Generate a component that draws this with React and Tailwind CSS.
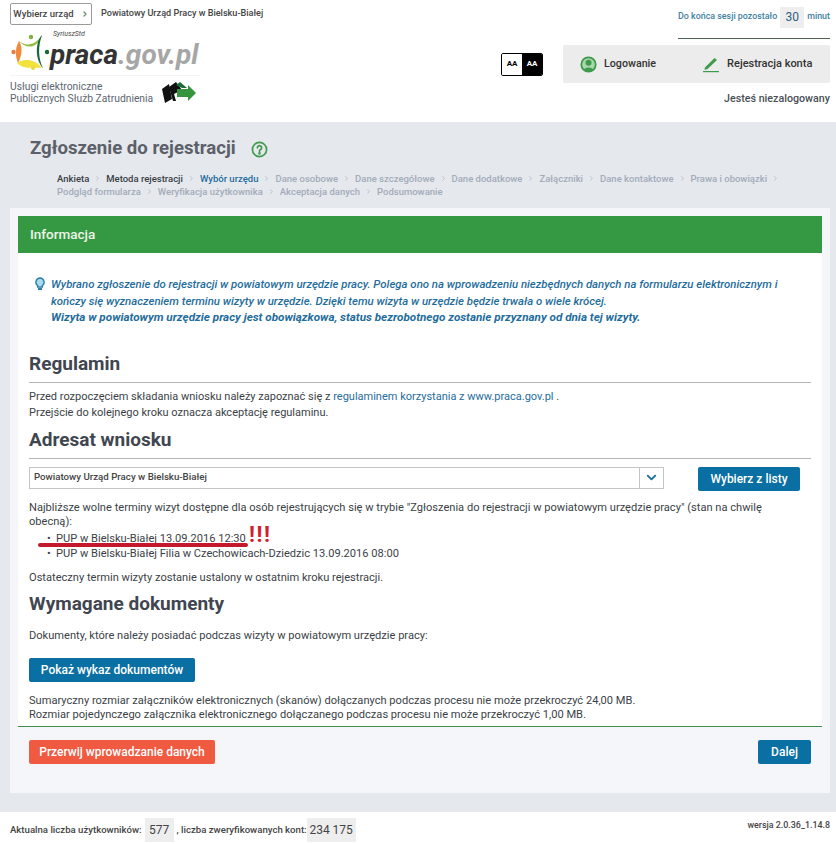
import React from 'react';
import { ChevronDown, ChevronRight } from 'lucide-react';

const stepsLine1 = [
  { label: 'Ankieta', state: 'done' },
  { label: 'Metoda rejestracji', state: 'done' },
  { label: 'Wybór urzędu', state: 'current' },
  { label: 'Dane osobowe' },
  { label: 'Dane szczegółowe' },
  { label: 'Dane dodatkowe' },
  { label: 'Załączniki' },
  { label: 'Dane kontaktowe' },
  { label: 'Prawa i obowiązki' },
];
const stepsLine2 = ['Podgląd formularza', 'Weryfikacja użytkownika', 'Akceptacja danych', 'Podsumowanie'];

const LogoMark = () => (
  <svg width="38" height="36" viewBox="0 0 38 36" className="shrink-0">
    <path d="M7 6 C14 13 24 12 31 1 C28 12 17 18 7 6Z" fill="#8fbf3f" />
    <circle cx="20" cy="3" r="2.2" fill="#7fb23a" />
    <path d="M8 7 C12 13 11 22 7 29 C4 22 4 14 8 7Z" fill="#f08a3c" />
    <circle cx="2.5" cy="18" r="2.2" fill="#ef7d3a" />
    <path d="M6 29 C13 24 24 25 31 34 C22 33 13 36 6 29Z" fill="#f2e23e" />
    <circle cx="22" cy="34" r="2" fill="#e9da3c" />
    <path d="M31 1 C24 8 24 26 32 34 C27 24 27 12 31 1Z" fill="#17693a" />
    <circle cx="36" cy="18" r="2.2" fill="#17693a" />
  </svg>
);

const SmallArrow = () => (
  <svg width="34" height="22" viewBox="0 0 34 22" className="shrink-0">
    <path d="M0 7 L7 2 L10 17 L3 21Z" fill="#111" />
    <path d="M7 5 L14 0 L20 8 L12 12 L14 19 L11 19Z" fill="#111" />
    <path d="M14 3 L18 0 L25 6 L20 6Z" fill="#1d6b3a" />
    <path d="M15 7 H26 V3 L34 11 L26 19 V15 H15Z" fill="#35953f" />
  </svg>
);

const Button = ({ className, children }) => (
  <button className={`h-6 rounded-[2px] text-white font-medium text-[12px] whitespace-nowrap ${className}`}>{children}</button>
);

const SectionTitle = ({ children, className }) => (
  <h2 className={`text-[19px] leading-[26px] font-bold text-[#3f4650] border-b border-[#b5b5b5] pb-[5px] ${className}`}>
    {children}
  </h2>
);

export default function App() {
  return (
    <div
      className="w-[836px] min-h-[844px] bg-white text-[11.1px] text-[#3b3f46]"
      style={{ fontFamily: 'Roboto, sans-serif' }}
    >
      {/* Header */}
      <header className="h-[122px] flex justify-between pl-[5px] pr-[6px]">
        <div className="pl-[5px] pt-[3px]">
          <div className="flex items-center gap-[9px]">
            <button className="h-[22px] w-[82px] border border-[#9a9a9a] rounded-[2px] flex items-center justify-center gap-[7px] text-[9.5px] font-medium text-[#444] whitespace-nowrap">
              Wybierz urząd
              <ChevronRight size={8} strokeWidth={4} className="text-[#6a8f6a]" />
            </button>
            <span className="text-[9.1px] font-medium text-[#444]">Powiatowy Urząd Pracy w Bielsku-Białej</span>
          </div>
          <div className="flex items-center mt-[8px] h-[38px] pl-[1px]">
            <LogoMark />
            <div className="relative ml-[1px] pt-[6px] text-[28px] leading-[28px] font-bold italic">
              <span className="absolute left-[3px] -top-[5px] text-[7px] leading-[9px] font-normal text-[#444]">SyriuszStd</span>
              <span className="text-[#333333]">praca</span>
              <span className="text-[#a6a6a6]">.gov.pl</span>
            </div>
          </div>
          <div className="mt-[4px] pt-[5px] border-t border-[#f4f4f4] w-[190px] flex items-center gap-[9px] text-[10.3px] leading-[12px] text-[#5d6670] whitespace-nowrap">
            <div>
              Usługi elektroniczne
              <br />
              Publicznych Służb Zatrudnienia
            </div>
            <SmallArrow />
          </div>
        </div>

        <div className="flex flex-col items-end">
          <div className="flex items-center h-[24px] mt-[5px] text-[8.9px] font-medium text-[#3f7fa3]">
            <span>Do końca sesji pozostało</span>
            <span className="mx-[3px] w-[24px] h-[21px] bg-[#eeeeee] flex items-center justify-center text-[12px] font-normal text-[#2f5f7f]">30</span>
            <span>minut</span>
          </div>
          <div className="w-[152px] border-t border-[#4f6355] mt-[9px]" />
          <div className="flex items-center mt-[6px]">
            <div className="flex h-[23px] w-[42px] border border-black rounded-[2px] text-[8px] font-bold overflow-hidden">
              <span className="flex-1 bg-white text-black flex items-center justify-center">AA</span>
              <span className="flex-1 bg-black text-white flex items-center justify-center">AA</span>
            </div>
            <div className="ml-[20px] w-[267px] h-[38px] bg-[#ececec] rounded-[2px] flex items-center">
              <div className="flex items-center gap-[7px] ml-[17px] text-[10.7px] font-medium text-[#333]">
                <svg width="17" height="17" viewBox="0 0 17 17">
                  <circle cx="8.5" cy="8.5" r="7.2" fill="#a8d8ac" stroke="#3f9a4c" strokeWidth="1.8" />
                  <circle cx="8.5" cy="6.8" r="3" fill="#3f9a4c" />
                  <path d="M3.5 14 C4.5 10.5 12.5 10.5 13.5 14 C11 16 6 16 3.5 14Z" fill="#3f9a4c" />
                </svg>
                Logowanie
              </div>
              <div className="flex items-center gap-[7px] ml-[46px] text-[11px] font-medium text-[#333]">
                <svg width="18" height="17" viewBox="0 0 18 17">
                  <path d="M3 11.5 L12.5 2 L15 4 L5.5 13 L2.5 14Z" fill="#3f9a4c" />
                  <rect x="1" y="15" width="16" height="1.2" fill="#3f9a4c" />
                </svg>
                Rejestracja konta
              </div>
            </div>
          </div>
          <div className="mt-[8px] text-[10.7px] font-medium text-[#4a4f55]">Jesteś niezalogowany</div>
        </div>
      </header>

      {/* Main band */}
      <main className="bg-[#e5e8ed] h-[690px] pt-[17px]">
        <div className="flex items-center pl-[30px] h-[20px]">
          <h1 className="text-[18.6px] font-bold text-[#5c6068]">Zgłoszenie do rejestracji</h1>
          <svg width="17" height="17" viewBox="0 0 24 24" className="ml-[15px]" fill="none" stroke="#3f9a4c" strokeWidth="2.4">
            <circle cx="12" cy="12" r="10" />
            <path d="M9 9.5a3 3 0 1 1 4.5 2.6c-1 .6-1.5 1.2-1.5 2.4" strokeLinecap="round" />
            <circle cx="12" cy="17.5" r="0.7" fill="#3f9a4c" />
          </svg>
        </div>

        <nav className="pl-[57px] pr-[40px] mt-[13px] text-[9.5px] leading-[13px] font-medium text-[#a3abb9]">
          <div className="flex items-center h-[13px] whitespace-nowrap">
            {stepsLine1.map((s) => (
              <React.Fragment key={s.label}>
                <span className={s.state === 'done' ? 'text-[#3a3f46]' : s.state === 'current' ? 'text-[#1f6d9c]' : ''}>{s.label}</span>
                <ChevronRight size={7} strokeWidth={3} className="mx-[5px] text-[#b3bac6]" />
              </React.Fragment>
            ))}
          </div>
          <div className="flex items-center h-[13px] whitespace-nowrap">
            {stepsLine2.map((s, i) => (
              <React.Fragment key={s}>
                <span>{s}</span>
                {i < stepsLine2.length - 1 && <ChevronRight size={7} strokeWidth={3} className="mx-[5px] text-[#b3bac6]" />}
              </React.Fragment>
            ))}
          </div>
        </nav>

        {/* Panel */}
        <section className="mx-[10px] mt-[10px] h-[585px] bg-[#f4f6fa] px-[8px] pt-[8px] w-[820px]">
          <div className="h-[37px] bg-[#359944] flex items-center pl-[12px] text-[13.5px] font-medium text-[#eef5e8]">
            Informacja
          </div>

          <div className="bg-white h-[474px] border-b border-[#3e8e4f] px-[11px] pt-[23px]">
            <div className="flex text-[#1f6d9c] italic text-[11.4px] leading-[16.5px] font-medium">
              <svg width="12" height="14" viewBox="0 0 12 14" className="ml-[5px] mr-[5px] mt-[1px] shrink-0">
                <path d="M6 1a4.2 4.2 0 0 0-2.4 7.6V10h4.8V8.6A4.2 4.2 0 0 0 6 1Z" fill="#a9dcef" stroke="#2f7fa8" strokeWidth="1.3" />
                <rect x="4" y="11" width="4" height="2" fill="#2f7fa8" />
              </svg>
              <div>
                Wybrano zgłoszenie do rejestracji w powiatowym urzędzie pracy. Polega ono na wprowadzeniu niezbędnych danych na formularzu elektronicznym i
                <br />
                kończy się wyznaczeniem terminu wizyty w urzędzie. Dzięki temu wizyta w urzędzie będzie trwała o wiele krócej.
                <br />
                <b className="font-bold text-[11.7px]">Wizyta w powiatowym urzędzie pracy jest obowiązkowa, status bezrobotnego zostanie przyznany od dnia tej wizyty.</b>
              </div>
            </div>

            <SectionTitle className="mt-[25px]">Regulamin</SectionTitle>
            <p className="mt-[6px] leading-[16px] text-[11px]">
              Przed rozpoczęciem składania wniosku należy zapoznać się z{' '}
              <span className="text-[#1f6d9c]">regulaminem korzystania z www.praca.gov.pl</span> .
              <br />
              Przejście do kolejnego kroku oznacza akceptację regulaminu.
            </p>

            <SectionTitle className="mt-[6px]">Adresat wniosku</SectionTitle>
            <div className="flex mt-[8px]">
              <div className="w-[635px] h-[22px] border border-[#c4c4c4] flex">
                <div className="flex-1 flex items-center pl-[4px] text-[9.7px] font-medium text-[#444]">Powiatowy Urząd Pracy w Bielsku-Białej</div>
                <div className="w-[24px] border-l border-[#c4c4c4] flex items-center justify-center">
                  <ChevronDown size={15} strokeWidth={3} className="text-[#1f6d9c]" />
                </div>
              </div>
              <Button className="ml-[34px] w-[102px] bg-[#0a6fa3]">Wybierz z listy</Button>
            </div>

            <p className="mt-[10px] leading-[14px]">
              Najbliższe wolne terminy wizyt dostępne dla osób rejestrujących się w trybie "Zgłoszenia do rejestracji w powiatowym urzędzie pracy" (stan na chwilę
              <br />
              obecną):
            </p>
            <ul className="relative mt-[2px] ml-[27px] list-none leading-[15px]">
              <li className="relative">
                <span className="absolute -left-[9px]">•</span>
                PUP w Bielsku-Białej 13.09.2016 12:30
              </li>
              <li className="relative">
                <span className="absolute -left-[9px]">•</span>
                PUP w Bielsku-Białej Filia w Czechowicach-Dziedzic 13.09.2016 08:00
              </li>
              {/* red marker added over the screenshot */}
              <span className="absolute -left-[18px] top-[12px] w-[210px] h-[4px] rounded-full bg-[#c4182c]" />
              <span className="absolute left-[193px] -top-[8px] text-[22px] leading-[24px] font-bold text-[#d0202f] tracking-[1.5px]">!!!</span>
            </ul>

            <p className="mt-[9px]">Ostateczny termin wizyty zostanie ustalony w ostatnim kroku rejestracji.</p>

            <SectionTitle className="mt-[5px] border-b-0">Wymagane dokumenty</SectionTitle>
            <p className="mt-[6px]">Dokumenty, które należy posiadać podczas wizyty w powiatowym urzędzie pracy:</p>
            <Button className="mt-[13px] w-[166px] bg-[#0a6fa3] block">Pokaż wykaz dokumentów</Button>
            <p className="mt-[12px] leading-[14px]">
              Sumaryczny rozmiar załączników elektronicznych (skanów) dołączanych podczas procesu nie może przekroczyć 24,00 MB.
              <br />
              Rozmiar pojedynczego załącznika elektronicznego dołączanego podczas procesu nie może przekroczyć 1,00 MB.
            </p>
          </div>

          <div className="flex justify-between px-[11px] mt-[13px]">
            <Button className="w-[186px] bg-[#ef5a41]">Przerwij wprowadzanie danych</Button>
            <Button className="w-[53px] bg-[#0a6fa3]">Dalej</Button>
          </div>
        </section>
      </main>

      {/* Footer */}
      <footer className="h-[32px] flex justify-between pl-[10px] pr-[6px] pt-[6px] text-[9.6px] font-medium text-[#444]">
        <div className="flex items-center h-[24px]">
          Aktualna liczba użytkowników:
          <span className="ml-[3px] mr-[3px] w-[29px] h-[24px] bg-[#eeeeee] flex items-center justify-center text-[12px] font-normal">577</span>
          , liczba zweryfikowanych kont:
          <span className="w-[49px] h-[24px] bg-[#eeeeee] flex items-center justify-center text-[12px] font-normal">234 175</span>
        </div>
        <div className="mt-[1px] text-[8.9px]">wersja 2.0.36_1.14.8</div>
      </footer>
    </div>
  );
}
